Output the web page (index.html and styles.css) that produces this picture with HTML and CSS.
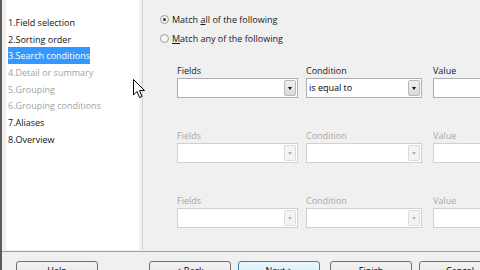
FILE: index.html
```html
<!DOCTYPE html>
<html lang="en">
<head>
<meta charset="UTF-8">
<title>Filter Wizard - Search conditions</title>
<link rel="stylesheet" href="styles.css">
</head>
<body>

<div class="window">
    <div class="main">
        <!-- step list on the left -->
        <ul class="steps">
            <li>1.Field selection</li>
            <li>2.Sorting order</li>
            <li><span class="current">3.Search conditions</span></li>
            <li class="off">4.Detail or summary</li>
            <li class="off">5.Grouping</li>
            <li class="off">6.Grouping conditions</li>
            <li>7.Aliases</li>
            <li>8.Overview</li>
        </ul>
        <div class="divider"></div>

        <div class="content">
            <label class="radio"><span class="dot checked"></span><span>Match <u>a</u>ll of the following</span></label>
            <label class="radio"><span class="dot"></span><span><u>M</u>atch any of the following</span></label>

            <div class="cond">
                <div class="field">
                    <div class="cap">Fields</div>
                    <div class="combo w-field"><span class="drop"></span></div>
                </div>
                <div class="field">
                    <div class="cap">Condition</div>
                    <div class="combo w-cond">is equal to<span class="drop"></span></div>
                </div>
                <div class="field">
                    <div class="cap">Value</div>
                    <div class="input"></div>
                </div>
            </div>

            <div class="cond disabled">
                <div class="field">
                    <div class="cap">Fields</div>
                    <div class="combo w-field"><span class="drop"></span></div>
                </div>
                <div class="field">
                    <div class="cap">Condition</div>
                    <div class="combo w-cond"><span class="drop"></span></div>
                </div>
                <div class="field">
                    <div class="cap">Value</div>
                    <div class="input"></div>
                </div>
            </div>

            <div class="cond disabled">
                <div class="field">
                    <div class="cap">Fields</div>
                    <div class="combo w-field"><span class="drop"></span></div>
                </div>
                <div class="field">
                    <div class="cap">Condition</div>
                    <div class="combo w-cond"><span class="drop"></span></div>
                </div>
                <div class="field">
                    <div class="cap">Value</div>
                    <div class="input"></div>
                </div>
            </div>
        </div>
    </div>

    <!-- wizard buttons -->
    <div class="buttons">
        <button class="btn help">Help</button>
        <button class="btn">&lt; Back</button>
        <button class="btn default">Next &gt;</button>
        <button class="btn">Finish</button>
        <button class="btn">Cancel</button>
    </div>

    <svg class="cursor" width="13" height="20" viewBox="0 0 13 20">
        <path d="M0.5 0.5 L0.5 16 L4 12.5 L6.5 18.5 L9 17.5 L6.5 11.5 L11.5 11.5 Z" fill="#fff" stroke="#000" stroke-width="1"/>
    </svg>
</div>

</body>
</html>
```

FILE: styles.css
```css
body {
    margin: 0;
    font-family: "Open Sans", "Noto Sans", sans-serif;
    font-size: 9px;
    color: #000;
}

.window {
    position: relative;
    width: 478px;
    height: 270px;
    overflow: hidden;
    background-color: #f0f0f0;
    border-left: 2px solid #5c5c5c;
}

.main {
    display: flex;
    height: 251px;
    border-bottom: 1px solid #a0a0a0;
}

.steps {
    flex-shrink: 0;
    list-style: none;
    margin: 0 0 0 4px;
    padding: 15px 0 0 2px;
    width: 131px;
    height: 235px;
    background-color: #fff;
}

.steps li {
    height: 16.7px;
    line-height: 16px;
    white-space: nowrap;
    color: #111;
}

.steps .off {
    color: #a3a3a3;
}

.current {
    background-color: #3399ff;
    color: #fff;
    padding: 2px 0;
}

.divider {
    flex-shrink: 0;
    width: 1px;
    margin-left: 3px;
    height: 250px;
    background-color: #d4d4d4;
}

.content {
    flex: 1;
    min-width: 0;
    padding: 10px 0 0 17px;
}

.radio {
    display: flex;
    align-items: center;
    height: 19px;
    color: #1a1a1a;
    white-space: nowrap;
}

.dot {
    flex-shrink: 0;
    width: 7px;
    height: 7px;
    border: 1px solid #9a9a9a;
    border-radius: 50%;
    background-color: #f6f6f6;
    margin-right: 3px;
    position: relative;
}

.dot.checked::after {
    content: '';
    position: absolute;
    left: 2px;
    top: 2px;
    width: 3px;
    height: 3px;
    border-radius: 50%;
    background-color: #333;
}

.cond {
    display: flex;
    margin: 17px 0 0 17px;
    height: 51px;
}

.cond + .cond {
    margin-top: 14px;
}

.field {
    flex-shrink: 0;
    margin-right: 8px;
}

.field:nth-child(2) {
    margin-right: 11px;
}

.cap {
    height: 13px;
    line-height: 12px;
    color: #222;
}

.combo, .input {
    position: relative;
    height: 18px;
    line-height: 18px;
    padding-left: 2px;
    background-color: #fff;
    border: 1px solid #abadb3;
    white-space: nowrap;
}

.w-field {
    width: 117px;
}

.w-cond {
    width: 112px;
}

.input {
    width: 60px;
}

.drop {
    position: absolute;
    right: 1px;
    top: 1px;
    width: 12px;
    height: 16px;
    border: 1px solid #b8b8b8;
    border-radius: 2px;
    background: linear-gradient(#f2f2f2, #d8d8d8);
    box-sizing: border-box;
}

.drop::after {
    content: '';
    position: absolute;
    left: 3px;
    top: 6px;
    border-left: 2px solid transparent;
    border-right: 2px solid transparent;
    border-top: 3px solid #111;
}

.disabled .cap {
    color: #a8a8a8;
}

.disabled .combo, .disabled .input {
    border-color: #d0d0d0;
}

.disabled .drop {
    border-color: #dcdcdc;
    background: #f4f4f4;
}

.disabled .drop::after {
    border-top-color: #b5b5b5;
}

.buttons {
    display: flex;
    padding: 9px 0 0 14px;
}

.btn {
    flex-shrink: 0;
    width: 82px;
    height: 23px;
    margin-right: 7px;
    padding: 0 0 5px;
    font-family: inherit;
    font-size: 9px;
    color: #000;
    border: 1px solid #707070;
    border-radius: 3px;
    background: linear-gradient(#f2f2f2 0%, #ebebeb 50%, #dddddd 51%, #cfcfcf 100%);
}

.btn.help {
    margin-right: 51px;
}

.btn.default {
    margin-right: 10px;
    border-color: #3c7fb1;
    background: linear-gradient(#eaf6fd 0%, #d9f0fc 50%, #bee6fd 51%, #a7d9f5 100%);
}

.cursor {
    position: absolute;
    left: 131px;
    top: 79px;
}
```
